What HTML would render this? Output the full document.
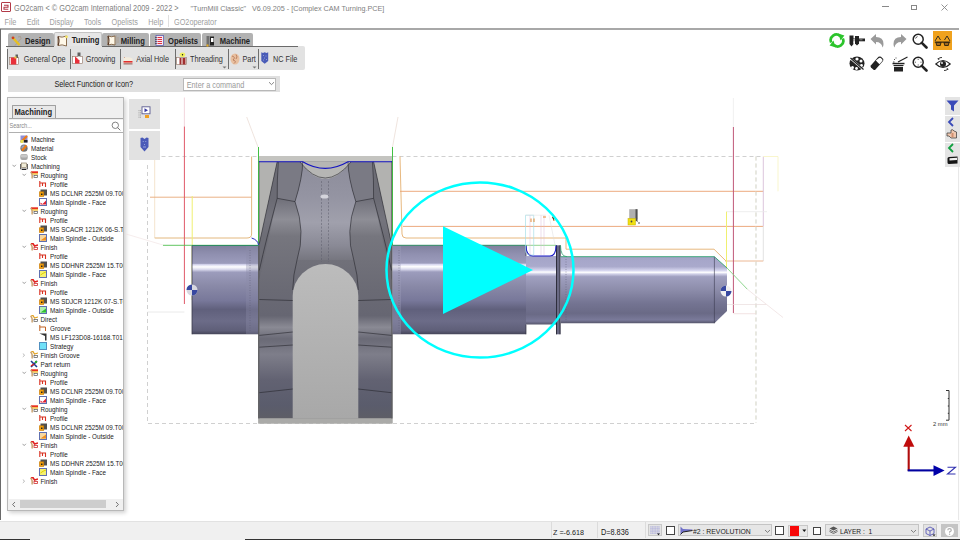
<!DOCTYPE html>
<html><head><meta charset="utf-8">
<style>
*{margin:0;padding:0;box-sizing:border-box}
html,body{width:960px;height:540px;overflow:hidden;background:#fff;font-family:"Liberation Sans",sans-serif;position:relative}
.a{position:absolute}
.t{position:absolute;white-space:nowrap;line-height:1;transform:scaleY(1.12);transform-origin:50% 10%}
#title{font-size:7.35px;color:#808080}
#menu .t{font-size:7.3px;color:#a0a0a0}
.tab{position:absolute;top:32.5px;height:13.8px;background:#b2b2b2;border-radius:2px 2px 0 0}
.tab.sel{top:32px;height:15px;background:#e6e6e6;border:1px solid #c4c4c4;border-bottom:none}
.tabt{font-weight:bold;font-size:7.6px;color:#222}
.tb{font-size:7.3px;color:#333}
.sep{position:absolute;width:1px;background:#6e6e6e}
.tree .t{font-size:6.3px;color:#222;letter-spacing:0}
</style></head><body>
<!-- title bar -->
<div class="a" style="left:1px;top:2px;width:10px;height:10px;border:1px solid #b23a48;border-radius:1px;background:#fff"></div>
<svg class="a" style="left:1px;top:2px" width="10" height="10"><path d="M3 3.2 H7 V5.2 H3 V7.2 H7.3" fill="none" stroke="#b23a48" stroke-width="1.1"/></svg>
<div id="title" class="t" style="left:14px;top:3.5px">GO2cam &lt; © GO2cam International 2009 - 2022 &gt;</div>
<div id="title2" class="t" style="left:190.5px;top:3.5px;font-size:7.2px;color:#808080">"TurnMill Classic" &nbsp; V6.09.205 - [Complex CAM Turning.PCE]</div>
<div id="menu">
<div class="t" style="left:4.6px;top:17.8px">File</div>
<div class="t" style="left:26.7px;top:17.8px">Edit</div>
<div class="t" style="left:49.6px;top:17.8px">Display</div>
<div class="t" style="left:84px;top:17.8px">Tools</div>
<div class="t" style="left:111.5px;top:17.8px">Opelists</div>
<div class="t" style="left:148.3px;top:17.8px">Help</div>
<div class="a" style="left:168px;top:15px;width:1px;height:12px;background:#e0e0e0"></div>
<div class="t" style="left:174px;top:17.8px">GO2operator</div>
</div>
<!-- window buttons -->
<div class="a" style="left:882px;top:6px;width:7px;height:1px;background:#888"></div>
<div class="a" style="left:911px;top:5px;width:6px;height:5px;border:1px solid #888"></div>
<svg class="a" style="left:940px;top:3px" width="9" height="9"><path d="M1.5 1.5 L7.5 7.5 M7.5 1.5 L1.5 7.5" stroke="#888" stroke-width="0.9"/></svg>
<!-- frame line -->
<div class="a" style="left:0;top:28px;width:959px;height:2px;background:#a8a8a8"></div>
<div class="a" style="left:0;top:29px;width:1.2px;height:491px;background:#6a6a6a"></div>


<!-- tabs -->
<div class="tab" style="left:8px;width:46px"></div>
<div class="tab sel" style="left:54px;width:48px"></div>
<div class="tab" style="left:102px;width:47px"></div>
<div class="tab" style="left:150px;width:51px"></div>
<div class="tab" style="left:202px;width:51px"></div>
<div class="t tabt" style="left:25px;top:37px">Design</div>
<div class="t tabt" style="left:71.7px;top:35.5px">Turning</div>
<div class="t tabt" style="left:120.8px;top:37px">Milling</div>
<div class="t tabt" style="left:168px;top:37px">Opelists</div>
<div class="t tabt" style="left:219.7px;top:37px">Machine</div>
<!-- toolbar -->
<div class="a" style="left:7px;top:46px;width:298px;height:24px;background:#e2e2e2;border-radius:0 2px 2px 0"></div>
<div class="a" style="left:6px;top:46px;width:48px;height:1px;background:#6a6a6a"></div><div class="a" style="left:102px;top:46px;width:196px;height:1px;background:#6a6a6a"></div>
<div class="sep" style="left:7px;top:49px;height:20px"></div>
<div class="sep" style="left:70px;top:49px;height:20px"></div>
<div class="sep" style="left:120px;top:49px;height:20px"></div>
<div class="sep" style="left:174.5px;top:49px;height:20px"></div>
<div class="sep" style="left:227.5px;top:49px;height:20px"></div>
<div class="sep" style="left:257.5px;top:49px;height:20px"></div>
<div class="t tb" style="left:23.8px;top:55.4px">General Ope</div>
<div class="t tb" style="left:85.8px;top:55.4px">Grooving</div>
<div class="t tb" style="left:136.2px;top:55.4px">Axial Hole</div>
<div class="t tb" style="left:190px;top:55.4px">Threading</div>
<div class="t tb" style="left:242.5px;top:55.4px">Part</div>
<div class="t tb" style="left:273px;top:55.4px">NC File</div>
<!-- toolbar icons -->
<svg class="a" style="left:11px;top:35.5px" width="11" height="10" viewBox="0 0 11 10">
<path d="M7 1 L9.5 0.5 L10 2.5 L4 9.5" fill="none" stroke="#a89888" stroke-width="0.8"/>
<path d="M1.5 1.5 L8.5 9" stroke="#e8c020" stroke-width="2.4"/>
<circle cx="2" cy="1.8" r="1.4" fill="#d04020"/>
</svg>
<svg class="a" style="left:56.5px;top:34.5px" width="11" height="12" viewBox="0 0 11 12">
<path d="M1 1.5 Q5 3 9.5 1 V11 Q5 9 1 10.5 Z" fill="#fff8e8" stroke="#806040" stroke-width="0.9"/>
<path d="M1 1.5 Q3 6 1 10.5" fill="none" stroke="#503020" stroke-width="1.1"/>
<circle cx="9.5" cy="1.8" r="1.4" fill="#f0e060"/>
</svg>
<svg class="a" style="left:106.5px;top:34px" width="12" height="12" viewBox="0 0 12 12">
<path d="M1 2 Q4.5 3.5 8 2 V11 Q4.5 9.5 1 11 Z" fill="#fff8e8" stroke="#806040" stroke-width="0.9"/>
<path d="M1 2 Q3 6.5 1 11" fill="none" stroke="#503020" stroke-width="1.1"/>
<path d="M9 1 V10 M11 3 V9" stroke="#b0a090" stroke-width="0.9"/>
</svg>
<svg class="a" style="left:155px;top:35.3px" width="9" height="11" viewBox="0 0 9 11">
<rect x="1" y="0.5" width="7.5" height="10" fill="#f8e8f0" stroke="#6060b0" stroke-width="0.8"/>
<path d="M2.5 2.5 H7 M2.5 4.5 H7 M2.5 6.5 H7 M2.5 8.5 H7" stroke="#e03040" stroke-width="1"/>
<path d="M0.5 2.5 H1.5 M0.5 4.5 H1.5 M0.5 6.5 H1.5 M0.5 8.5 H1.5" stroke="#111" stroke-width="1"/>
</svg>
<svg class="a" style="left:205.5px;top:34.5px" width="11" height="12" viewBox="0 0 11 12">
<rect x="0.5" y="1" width="3" height="10" fill="#707070"/>
<rect x="4" y="1.5" width="4" height="9" fill="#222"/>
<rect x="5" y="3" width="2.5" height="4" fill="#fff"/>
<rect x="0.5" y="9.5" width="2" height="2" fill="#f0b020"/>
</svg>
<svg class="a" style="left:9.3px;top:52.5px" width="10" height="12" viewBox="0 0 10 12">
<rect x="0.5" y="4.5" width="9" height="7" fill="#fff" stroke="#907060" stroke-width="0.6"/>
<rect x="1.8" y="4.5" width="5.5" height="7" fill="#e8303a"/>
<rect x="6.5" y="1.5" width="2.5" height="3.5" fill="#606060"/>
<rect x="5.5" y="3.5" width="2" height="2" fill="#f0d040"/>
</svg>
<svg class="a" style="left:71.8px;top:52px" width="11" height="12" viewBox="0 0 11 12">
<rect x="0.5" y="4.5" width="10" height="7" fill="#fff" stroke="#907060" stroke-width="0.6"/>
<path d="M3 4.5 L7.5 8 V11.5 H3 Z" fill="#e8303a"/>
<rect x="5.5" y="0.5" width="3" height="4" fill="#606060"/>
<rect x="5.8" y="4.5" width="2.5" height="3" fill="#fff"/>
</svg>
<svg class="a" style="left:123px;top:55.8px" width="10" height="9" viewBox="0 0 10 9">
<path d="M0.5 2 Q5 0.5 9.5 2.5 V8.5 H0.5 Z" fill="#f4ecdc"/>
<rect x="0.5" y="5" width="9" height="1.6" fill="#e03030"/>
<rect x="0.5" y="7.2" width="9" height="1.3" fill="#a07070"/>
<path d="M1 1 L2 2" stroke="#d08060" stroke-width="0.6"/>
</svg>
<svg class="a" style="left:176px;top:51.5px" width="11" height="13" viewBox="0 0 11 13">
<ellipse cx="6.5" cy="2.8" rx="2.8" ry="2.3" fill="#f0f060"/>
<circle cx="6.5" cy="2.8" r="0.7" fill="#111"/>
<rect x="0.5" y="5.5" width="10" height="7" fill="#fff" stroke="#907060" stroke-width="0.6"/>
<rect x="3.5" y="6" width="2" height="6.5" fill="#a03030"/><rect x="6.5" y="6" width="3" height="6.5" fill="#a03030"/>
</svg>
<svg class="a" style="left:229.5px;top:52.5px" width="10" height="12" viewBox="0 0 10 12">
<ellipse cx="5" cy="6" rx="4.5" ry="5.5" fill="#e8c0a0"/>
<path d="M2 3 Q6 4 3 7 Q7 8 4 10.5 M6 1.5 Q8 4 6 6" fill="none" stroke="#b07050" stroke-width="0.8"/>
</svg>
<svg class="a" style="left:261px;top:52px" width="7.5" height="12" viewBox="0 0 7.5 12">
<path d="M0.3 0.3 L2 1 L3.7 0.3 L5.5 1 L7.2 0.3 V9 L3.7 11.8 L0.3 9 Z" fill="#4a5cb8"/>
<circle cx="2.5" cy="3.5" r="0.45" fill="#dde"/><circle cx="5" cy="4" r="0.45" fill="#dde"/><circle cx="3.5" cy="6" r="0.45" fill="#dde"/><circle cx="5.5" cy="7.5" r="0.45" fill="#dde"/><circle cx="2.5" cy="8" r="0.45" fill="#dde"/>
</svg>
<svg class="a" style="left:221.5px;top:66px" width="5" height="3"><path d="M0.5 0.5 H4.5 L2.5 2.5Z" fill="#777"/></svg>
<svg class="a" style="left:251.5px;top:66px" width="5" height="3"><path d="M0.5 0.5 H4.5 L2.5 2.5Z" fill="#777"/></svg>
<!-- select row -->
<div class="a" style="left:7.5px;top:75.5px;width:272px;height:16.5px;background:#e0e0e0"></div>
<div class="t" style="left:54.4px;top:80px;font-size:7.3px;color:#222">Select Function or Icon?</div>
<div class="a" style="left:183.4px;top:78px;width:93px;height:12.7px;background:#fff;border:1px solid #b8b8b8"></div>
<div class="t" style="left:186.7px;top:80.5px;font-size:7.3px;color:#999">Enter a command</div>
<svg class="a" style="left:268px;top:81px" width="7" height="5"><path d="M1 1.2 L3.5 3.6 L6 1.2" fill="none" stroke="#666" stroke-width="0.8"/></svg>

<!-- left panel -->
<div class="a" style="left:7px;top:97px;width:117px;height:414px;background:#f0f0f0;border:1.5px solid #b8b8b8;box-shadow:2px 2px 4px rgba(0,0,0,0.18)"></div>
<div class="a" style="left:11.5px;top:105px;width:44px;height:13px;background:#e8e8e8;border:1px solid #a0a0a0;border-bottom:none;border-radius:1px 1px 0 0"></div>
<div class="a" style="left:8.5px;top:117.5px;width:114px;height:1px;background:#a8a8a8"></div>
<div class="t" style="left:14.5px;top:108px;font-size:7.6px;font-weight:bold;color:#222">Machining</div>
<div class="a" style="left:8.5px;top:119.5px;width:114px;height:13.5px;background:#fff;border-bottom:1px solid #b0b0b0"></div>
<div class="t" style="left:9.5px;top:123.5px;font-size:5.6px;color:#888">Search...</div>
<svg class="a" style="left:111px;top:121px" width="10" height="10"><circle cx="4.3" cy="4.3" r="3.2" fill="none" stroke="#666" stroke-width="0.8"/><path d="M6.6 6.6 L9.3 9.3" stroke="#666" stroke-width="0.9"/></svg>
<div class="a" style="left:8.5px;top:133px;width:114px;height:366px;background:#fff;overflow:hidden">
<div class="tree" style="position:absolute;left:-8.5px;top:-133px;width:200px;height:600px">
<svg class="a" style="left:20.0px;top:135.1px" width="8" height="8"><rect x="0.5" y="0.5" width="7" height="7" fill="#8f8fd8"/><path d="M1 7 L4 4 L7 1" stroke="#f07a10" stroke-width="2.2"/><rect x="0.5" y="5" width="3" height="3" fill="#e8e050"/><rect x="4" y="5" width="3.5" height="2.5" fill="#222"/></svg>
<div class="t" style="left:31.0px;top:135.7px">Machine</div>
<svg class="a" style="left:20.0px;top:144.1px" width="8" height="8"><circle cx="4" cy="4.2" r="3.6" fill="#707070"/><circle cx="3.5" cy="3.5" r="2.2" fill="#9aa0b8"/><path d="M2 6.5 L6.5 1.5" stroke="#f07a10" stroke-width="2"/></svg>
<div class="t" style="left:31.0px;top:144.7px">Material</div>
<svg class="a" style="left:20.0px;top:153.1px" width="8" height="8"><rect x="0.3" y="1" width="7.4" height="6" rx="2" fill="#a8a8a8"/><rect x="1" y="1.6" width="6" height="3" rx="1.3" fill="#c8c8c8"/></svg>
<div class="t" style="left:31.0px;top:153.7px">Stock</div>
<svg class="a" style="left:12.0px;top:164.1px" width="5" height="4"><path d="M0.5 0.8 L2.2 2.6 L3.9 0.8" fill="none" stroke="#777" stroke-width="0.7"/></svg>
<svg class="a" style="left:20.0px;top:162.1px" width="8" height="8"><path d="M0.5 2 L0.5 7 L7.5 7 L7.5 2" fill="none" stroke="#555" stroke-width="0.9"/><rect x="1.5" y="1" width="5" height="4.5" fill="#f0ecd8" stroke="#7a6a50" stroke-width="0.6"/><rect x="2" y="7" width="4" height="1" fill="#222"/></svg>
<div class="t" style="left:31.0px;top:162.7px">Machining</div>
<svg class="a" style="left:21.5px;top:173.1px" width="5" height="4"><path d="M0.5 0.8 L2.2 2.6 L3.9 0.8" fill="none" stroke="#777" stroke-width="0.7"/></svg>
<svg class="a" style="left:29.5px;top:171.1px" width="8" height="8"><rect x="1" y="0.3" width="7" height="2" fill="#e83020"/><rect x="1" y="2.2" width="7" height="1.5" fill="#f0c040"/><path d="M0.5 1 Q3 3 2 7.5" stroke="#c8a070" stroke-width="1.4" fill="#f4e0c0"/><rect x="4" y="4.5" width="3.5" height="2" fill="none" stroke="#555" stroke-width="0.7"/></svg>
<div class="t" style="left:40.5px;top:171.7px">Roughing</div>
<svg class="a" style="left:39.0px;top:180.1px" width="8" height="8"><path d="M0.8 1 L0.8 7 M0.8 3 L6.5 3 L6.5 7 M3.5 3 L3.5 6" stroke="#d83020" stroke-width="1.1" fill="none"/></svg>
<div class="t" style="left:50.0px;top:180.7px">Profile</div>
<svg class="a" style="left:39.0px;top:189.1px" width="8" height="8"><rect x="1.5" y="0.5" width="6.5" height="6" fill="#505050"/><rect x="0.3" y="2.8" width="4.5" height="4.8" fill="#f0a010" stroke="#c07000" stroke-width="0.5"/><rect x="2" y="4.5" width="1.5" height="1.5" fill="#222"/></svg>
<div class="t" style="left:50.0px;top:189.7px">MS DCLNR 2525M 09.T00</div>
<svg class="a" style="left:39.0px;top:198.1px" width="8" height="8"><rect x="0.5" y="0.5" width="7" height="7" fill="#fff" stroke="#6070b0" stroke-width="1"/><path d="M1.5 4.5 L3.5 6 L7 2.5 L7 6.5 L1.5 6.5Z" fill="#e02030"/></svg>
<div class="t" style="left:50.0px;top:198.7px">Main Spindle - Face</div>
<svg class="a" style="left:21.5px;top:209.1px" width="5" height="4"><path d="M0.5 0.8 L2.2 2.6 L3.9 0.8" fill="none" stroke="#777" stroke-width="0.7"/></svg>
<svg class="a" style="left:29.5px;top:207.1px" width="8" height="8"><rect x="1" y="0.3" width="7" height="2" fill="#e83020"/><rect x="1" y="2.2" width="7" height="1.5" fill="#f0c040"/><path d="M0.5 1 Q3 3 2 7.5" stroke="#c8a070" stroke-width="1.4" fill="#f4e0c0"/><rect x="4" y="4.5" width="3.5" height="2" fill="none" stroke="#555" stroke-width="0.7"/></svg>
<div class="t" style="left:40.5px;top:207.7px">Roughing</div>
<svg class="a" style="left:39.0px;top:216.1px" width="8" height="8"><path d="M0.8 1 L0.8 7 M0.8 3 L6.5 3 L6.5 7 M3.5 3 L3.5 6" stroke="#d83020" stroke-width="1.1" fill="none"/></svg>
<div class="t" style="left:50.0px;top:216.7px">Profile</div>
<svg class="a" style="left:39.0px;top:225.1px" width="8" height="8"><rect x="1.5" y="0.5" width="6.5" height="6" fill="#505050"/><rect x="0.3" y="2.8" width="4.5" height="4.8" fill="#f0a010" stroke="#c07000" stroke-width="0.5"/><rect x="2" y="4.5" width="1.5" height="1.5" fill="#222"/></svg>
<div class="t" style="left:50.0px;top:225.7px">MS SCACR 1212K 06-S.T</div>
<svg class="a" style="left:39.0px;top:234.1px" width="8" height="8"><rect x="0.5" y="0.5" width="7" height="7" fill="#f8d8a0" stroke="#6070b0" stroke-width="1"/><path d="M1.5 6.5 L7 2.5 L7 6.5Z" fill="#f09020"/></svg>
<div class="t" style="left:50.0px;top:234.7px">Main Spindle - Outside</div>
<svg class="a" style="left:21.5px;top:245.1px" width="5" height="4"><path d="M0.5 0.8 L2.2 2.6 L3.9 0.8" fill="none" stroke="#777" stroke-width="0.7"/></svg>
<svg class="a" style="left:29.5px;top:243.1px" width="8" height="8"><path d="M1 1 L3 0.5 L4.5 3 L8 2" stroke="#e02020" stroke-width="1.5" fill="none"/><path d="M0.5 1 Q3 3 2 7.5" stroke="#c8a070" stroke-width="1.4" fill="#f4e0c0"/><rect x="4" y="4.5" width="3.5" height="2" fill="none" stroke="#d03030" stroke-width="0.8"/></svg>
<div class="t" style="left:40.5px;top:243.7px">Finish</div>
<svg class="a" style="left:39.0px;top:252.1px" width="8" height="8"><path d="M0.8 1 L0.8 7 M0.8 3 L6.5 3 L6.5 7 M3.5 3 L3.5 6" stroke="#d83020" stroke-width="1.1" fill="none"/></svg>
<div class="t" style="left:50.0px;top:252.7px">Profile</div>
<svg class="a" style="left:39.0px;top:261.1px" width="8" height="8"><rect x="1.5" y="0.5" width="6.5" height="6" fill="#505050"/><rect x="0.3" y="2.8" width="4.5" height="4.8" fill="#f0a010" stroke="#c07000" stroke-width="0.5"/><rect x="2" y="4.5" width="1.5" height="1.5" fill="#222"/></svg>
<div class="t" style="left:50.0px;top:261.7px">MS DDHNR 2525M 15.T00</div>
<svg class="a" style="left:39.0px;top:270.1px" width="8" height="8"><rect x="0.5" y="0.5" width="7" height="7" fill="#f4f070" stroke="#6070b0" stroke-width="1"/><path d="M1.5 5 Q4 3 7 2" stroke="#e0d000" fill="none"/></svg>
<div class="t" style="left:50.0px;top:270.7px">Main Spindle - Face</div>
<svg class="a" style="left:21.5px;top:281.1px" width="5" height="4"><path d="M0.5 0.8 L2.2 2.6 L3.9 0.8" fill="none" stroke="#777" stroke-width="0.7"/></svg>
<svg class="a" style="left:29.5px;top:279.1px" width="8" height="8"><path d="M1 1 L3 0.5 L4.5 3 L8 2" stroke="#e02020" stroke-width="1.5" fill="none"/><path d="M0.5 1 Q3 3 2 7.5" stroke="#c8a070" stroke-width="1.4" fill="#f4e0c0"/><rect x="4" y="4.5" width="3.5" height="2" fill="none" stroke="#d03030" stroke-width="0.8"/></svg>
<div class="t" style="left:40.5px;top:279.7px">Finish</div>
<svg class="a" style="left:39.0px;top:288.1px" width="8" height="8"><path d="M0.8 1 L0.8 7 M0.8 3 L6.5 3 L6.5 7 M3.5 3 L3.5 6" stroke="#d83020" stroke-width="1.1" fill="none"/></svg>
<div class="t" style="left:50.0px;top:288.7px">Profile</div>
<svg class="a" style="left:39.0px;top:297.1px" width="8" height="8"><rect x="1.5" y="0.5" width="6.5" height="6" fill="#505050"/><rect x="0.3" y="2.8" width="4.5" height="4.8" fill="#f0a010" stroke="#c07000" stroke-width="0.5"/><rect x="2" y="4.5" width="1.5" height="1.5" fill="#222"/></svg>
<div class="t" style="left:50.0px;top:297.7px">MS SDJCR 1212K 07-S.T0</div>
<svg class="a" style="left:39.0px;top:306.1px" width="8" height="8"><rect x="0.5" y="0.5" width="7" height="7" fill="#b0f0b0" stroke="#6070b0" stroke-width="1"/><path d="M1.5 6.5 L7 2.5 L7 6.5Z" fill="#30c030"/></svg>
<div class="t" style="left:50.0px;top:306.7px">Main Spindle - Outside</div>
<svg class="a" style="left:21.5px;top:317.1px" width="5" height="4"><path d="M0.5 0.8 L2.2 2.6 L3.9 0.8" fill="none" stroke="#777" stroke-width="0.7"/></svg>
<svg class="a" style="left:29.5px;top:315.1px" width="8" height="8"><path d="M1 1 L3 0.5 L4.5 3 L8 2" stroke="#e0a020" stroke-width="1.2" fill="none"/><path d="M0.5 1 Q3 3 2 7.5" stroke="#c8a070" stroke-width="1.4" fill="#f4e0c0"/><rect x="4" y="4.5" width="3.5" height="2" fill="none" stroke="#555" stroke-width="0.7"/></svg>
<div class="t" style="left:40.5px;top:315.7px">Direct</div>
<svg class="a" style="left:39.0px;top:324.1px" width="8" height="8"><path d="M0.8 1 L0.8 7 M0.8 3 L6.5 3 L6.5 7" stroke="#c06020" stroke-width="1" fill="none"/></svg>
<div class="t" style="left:50.0px;top:324.7px">Groove</div>
<svg class="a" style="left:39.0px;top:333.1px" width="8" height="8"><path d="M0.5 0.5 L7.5 0.5 L7.5 7.5 L6 7.5 L6 3 Z" fill="#333"/></svg>
<div class="t" style="left:50.0px;top:333.7px">MS LF123D08-16168.T01</div>
<svg class="a" style="left:39.0px;top:342.1px" width="8" height="8"><rect x="0.5" y="0.5" width="7" height="7" fill="#70e0f8" stroke="#5090c0" stroke-width="1"/></svg>
<div class="t" style="left:50.0px;top:342.7px">Strategy</div>
<svg class="a" style="left:22.0px;top:352.6px" width="4" height="5"><path d="M0.8 0.5 L2.6 2.2 L0.8 3.9" fill="none" stroke="#999" stroke-width="0.7"/></svg>
<svg class="a" style="left:29.5px;top:351.1px" width="8" height="8"><path d="M1 1 L3 0.5 L4.5 3 L8 2" stroke="#e0a020" stroke-width="1.2" fill="none"/><path d="M0.5 1 Q3 3 2 7.5" stroke="#c8a070" stroke-width="1.4" fill="#f4e0c0"/><rect x="4" y="4.5" width="3.5" height="2" fill="none" stroke="#555" stroke-width="0.7"/></svg>
<div class="t" style="left:40.5px;top:351.7px">Finish Groove</div>
<svg class="a" style="left:29.5px;top:360.1px" width="8" height="8"><path d="M1 1 L7 7 M7 1 L1 7" stroke="#1a3a90" stroke-width="1.6"/><path d="M1 6 L4 4" stroke="#e02020" stroke-width="1.5"/><circle cx="6" cy="2" r="1.2" fill="#30b030"/></svg>
<div class="t" style="left:40.5px;top:360.7px">Part return</div>
<svg class="a" style="left:21.5px;top:371.1px" width="5" height="4"><path d="M0.5 0.8 L2.2 2.6 L3.9 0.8" fill="none" stroke="#777" stroke-width="0.7"/></svg>
<svg class="a" style="left:29.5px;top:369.1px" width="8" height="8"><rect x="1" y="0.3" width="7" height="2" fill="#e83020"/><rect x="1" y="2.2" width="7" height="1.5" fill="#f0c040"/><path d="M0.5 1 Q3 3 2 7.5" stroke="#c8a070" stroke-width="1.4" fill="#f4e0c0"/><rect x="4" y="4.5" width="3.5" height="2" fill="none" stroke="#555" stroke-width="0.7"/></svg>
<div class="t" style="left:40.5px;top:369.7px">Roughing</div>
<svg class="a" style="left:39.0px;top:378.1px" width="8" height="8"><path d="M0.8 1 L0.8 7 M0.8 3 L6.5 3 L6.5 7 M3.5 3 L3.5 6" stroke="#d83020" stroke-width="1.1" fill="none"/></svg>
<div class="t" style="left:50.0px;top:378.7px">Profile</div>
<svg class="a" style="left:39.0px;top:387.1px" width="8" height="8"><rect x="1.5" y="0.5" width="6.5" height="6" fill="#505050"/><rect x="0.3" y="2.8" width="4.5" height="4.8" fill="#f0a010" stroke="#c07000" stroke-width="0.5"/><rect x="2" y="4.5" width="1.5" height="1.5" fill="#222"/></svg>
<div class="t" style="left:50.0px;top:387.7px">MS DCLNR 2525M 09.T00</div>
<svg class="a" style="left:39.0px;top:396.1px" width="8" height="8"><rect x="0.5" y="0.5" width="7" height="7" fill="#fff" stroke="#6070b0" stroke-width="1"/><path d="M1.5 4.5 L3.5 6 L7 2.5 L7 6.5 L1.5 6.5Z" fill="#e02030"/></svg>
<div class="t" style="left:50.0px;top:396.7px">Main Spindle - Face</div>
<svg class="a" style="left:21.5px;top:407.1px" width="5" height="4"><path d="M0.5 0.8 L2.2 2.6 L3.9 0.8" fill="none" stroke="#777" stroke-width="0.7"/></svg>
<svg class="a" style="left:29.5px;top:405.1px" width="8" height="8"><rect x="1" y="0.3" width="7" height="2" fill="#e83020"/><rect x="1" y="2.2" width="7" height="1.5" fill="#f0c040"/><path d="M0.5 1 Q3 3 2 7.5" stroke="#c8a070" stroke-width="1.4" fill="#f4e0c0"/><rect x="4" y="4.5" width="3.5" height="2" fill="none" stroke="#555" stroke-width="0.7"/></svg>
<div class="t" style="left:40.5px;top:405.7px">Roughing</div>
<svg class="a" style="left:39.0px;top:414.1px" width="8" height="8"><path d="M0.8 1 L0.8 7 M0.8 3 L6.5 3 L6.5 7 M3.5 3 L3.5 6" stroke="#d83020" stroke-width="1.1" fill="none"/></svg>
<div class="t" style="left:50.0px;top:414.7px">Profile</div>
<svg class="a" style="left:39.0px;top:423.1px" width="8" height="8"><rect x="1.5" y="0.5" width="6.5" height="6" fill="#505050"/><rect x="0.3" y="2.8" width="4.5" height="4.8" fill="#f0a010" stroke="#c07000" stroke-width="0.5"/><rect x="2" y="4.5" width="1.5" height="1.5" fill="#222"/></svg>
<div class="t" style="left:50.0px;top:423.7px">MS DCLNR 2525M 09.T00</div>
<svg class="a" style="left:39.0px;top:432.1px" width="8" height="8"><rect x="0.5" y="0.5" width="7" height="7" fill="#f8d8a0" stroke="#6070b0" stroke-width="1"/><path d="M1.5 6.5 L7 2.5 L7 6.5Z" fill="#f09020"/></svg>
<div class="t" style="left:50.0px;top:432.7px">Main Spindle - Outside</div>
<svg class="a" style="left:21.5px;top:443.1px" width="5" height="4"><path d="M0.5 0.8 L2.2 2.6 L3.9 0.8" fill="none" stroke="#777" stroke-width="0.7"/></svg>
<svg class="a" style="left:29.5px;top:441.1px" width="8" height="8"><path d="M1 1 L3 0.5 L4.5 3 L8 2" stroke="#e02020" stroke-width="1.5" fill="none"/><path d="M0.5 1 Q3 3 2 7.5" stroke="#c8a070" stroke-width="1.4" fill="#f4e0c0"/><rect x="4" y="4.5" width="3.5" height="2" fill="none" stroke="#d03030" stroke-width="0.8"/></svg>
<div class="t" style="left:40.5px;top:441.7px">Finish</div>
<svg class="a" style="left:39.0px;top:450.1px" width="8" height="8"><path d="M0.8 1 L0.8 7 M0.8 3 L6.5 3 L6.5 7 M3.5 3 L3.5 6" stroke="#d83020" stroke-width="1.1" fill="none"/></svg>
<div class="t" style="left:50.0px;top:450.7px">Profile</div>
<svg class="a" style="left:39.0px;top:459.1px" width="8" height="8"><rect x="1.5" y="0.5" width="6.5" height="6" fill="#505050"/><rect x="0.3" y="2.8" width="4.5" height="4.8" fill="#f0a010" stroke="#c07000" stroke-width="0.5"/><rect x="2" y="4.5" width="1.5" height="1.5" fill="#222"/></svg>
<div class="t" style="left:50.0px;top:459.7px">MS DDHNR 2525M 15.T00</div>
<svg class="a" style="left:39.0px;top:468.1px" width="8" height="8"><rect x="0.5" y="0.5" width="7" height="7" fill="#f4f070" stroke="#6070b0" stroke-width="1"/><path d="M1.5 5 Q4 3 7 2" stroke="#e0d000" fill="none"/></svg>
<div class="t" style="left:50.0px;top:468.7px">Main Spindle - Face</div>
<svg class="a" style="left:22.0px;top:478.6px" width="4" height="5"><path d="M0.8 0.5 L2.6 2.2 L0.8 3.9" fill="none" stroke="#999" stroke-width="0.7"/></svg>
<svg class="a" style="left:29.5px;top:477.1px" width="8" height="8"><path d="M1 1 L3 0.5 L4.5 3 L8 2" stroke="#e02020" stroke-width="1.5" fill="none"/><path d="M0.5 1 Q3 3 2 7.5" stroke="#c8a070" stroke-width="1.4" fill="#f4e0c0"/><rect x="4" y="4.5" width="3.5" height="2" fill="none" stroke="#d03030" stroke-width="0.8"/></svg>
<div class="t" style="left:40.5px;top:477.7px">Finish</div>
</div></div>
<div class="a" style="left:8.5px;top:499px;width:114px;height:10px;background:#f0f0f0"></div>
<div class="a" style="left:19.5px;top:499.5px;width:86px;height:8.5px;background:#cdcdcd"></div>
<svg class="a" style="left:11px;top:500.5px" width="6" height="7"><path d="M4 1 L1.6 3.5 L4 6" fill="none" stroke="#555" stroke-width="0.8"/></svg>
<svg class="a" style="left:114px;top:500.5px" width="6" height="7"><path d="M2 1 L4.4 3.5 L2 6" fill="none" stroke="#555" stroke-width="0.8"/></svg>
<!-- VIEWPORT SVG -->
<svg id="vp" class="a" style="left:0;top:0" width="960" height="540" viewBox="0 0 960 540">
<defs>
<linearGradient id="shaftL" x1="0" y1="0" x2="0" y2="1">
<stop offset="0" stop-color="#80809e"/>
<stop offset="0.1" stop-color="#9090b0"/>
<stop offset="0.2" stop-color="#9c9cbc"/>
<stop offset="0.215" stop-color="#d8d8f0"/>
<stop offset="0.24" stop-color="#ffffff"/>
<stop offset="0.27" stop-color="#d8d8ec"/>
<stop offset="0.3" stop-color="#9c9cbc"/>
<stop offset="0.45" stop-color="#8a8aa8"/>
<stop offset="0.62" stop-color="#78789a"/>
<stop offset="0.72" stop-color="#60607c"/>
<stop offset="0.85" stop-color="#6c6c88"/>
<stop offset="0.96" stop-color="#5e5e78"/>
<stop offset="1" stop-color="#444458"/>
</linearGradient>
<linearGradient id="shaftT" x1="0" y1="0" x2="0" y2="1">
<stop offset="0" stop-color="#a4a4c8"/>
<stop offset="0.15" stop-color="#aaaacc"/>
<stop offset="0.21" stop-color="#d8d8f0"/>
<stop offset="0.235" stop-color="#ffffff"/>
<stop offset="0.26" stop-color="#d0d0e8"/>
<stop offset="0.3" stop-color="#a0a0c0"/>
<stop offset="0.5" stop-color="#8c8caa"/>
<stop offset="0.7" stop-color="#747492"/>
<stop offset="0.85" stop-color="#6a6a86"/>
<stop offset="0.95" stop-color="#7a7a9a"/>
<stop offset="1" stop-color="#55556a"/>
</linearGradient>
<linearGradient id="web" x1="0" y1="0" x2="0" y2="1">
<stop offset="0" stop-color="#76767e"/>
<stop offset="0.14" stop-color="#6e6e78"/>
<stop offset="0.225" stop-color="#8e8e96"/>
<stop offset="0.29" stop-color="#76767e"/>
<stop offset="0.5" stop-color="#6a6a74"/>
<stop offset="0.6" stop-color="#666672"/>
<stop offset="0.645" stop-color="#8a8a94"/>
<stop offset="0.69" stop-color="#6a6a76"/>
<stop offset="0.75" stop-color="#7e7e8a"/>
<stop offset="0.85" stop-color="#626272"/>
<stop offset="0.95" stop-color="#5a5c6c"/>
<stop offset="1" stop-color="#5e5e66"/>
</linearGradient>
<linearGradient id="ctr" x1="0" y1="0" x2="0" y2="1">
<stop offset="0" stop-color="#8c8c9a"/>
<stop offset="0.35" stop-color="#9494a2"/>
<stop offset="0.62" stop-color="#a0a0ac"/>
<stop offset="0.85" stop-color="#8a8a96"/>
<stop offset="1" stop-color="#76767f"/>
</linearGradient>
<linearGradient id="pin" x1="0" y1="0" x2="0" y2="1">
<stop offset="0" stop-color="#bcbcbc"/>
<stop offset="1" stop-color="#a8a8a8"/>
</linearGradient>
</defs>
<!-- dashed bounding rect -->
<path d="M147.5 156.5 H763 M147.5 165 V423.5 H756 M756 156.5 V423" fill="none" stroke="#c4c4c4" stroke-width="0.8" stroke-dasharray="4 3"/>
<!-- left orange toolpath rect -->
<path d="M154.7 156.5 V238" fill="none" stroke="#f0dcc0" stroke-width="0.8"/><path d="M154.7 238 H247 Q251.6 238 251.6 234 V156.5" fill="none" stroke="#e0b070" stroke-width="0.9"/>
<path d="M150 197.2 H251.6" fill="none" stroke="#e8a878" stroke-width="0.9"/>
<path d="M184.4 97.5 V126.5" stroke="#f0d0d8" stroke-width="0.9"/>
<path d="M184.4 126.5 V304" stroke="#e05a6a" stroke-width="1"/><path d="M147.5 312 H184.4" stroke="#e4e4e4" stroke-width="0.8"/>
<path d="M192.2 196 V300" stroke="#f0f070" stroke-width="1"/>
<path d="M163 245.3 H258.5 M258.5 147 V245" stroke="#50c050" stroke-width="0.9" fill="none"/>
<path d="M392.5 147 V245" stroke="#50c050" stroke-width="0.9" fill="none"/>
<path d="M246.7 117 L258 147 M398 117 L392.5 147" stroke="#e8d8d0" stroke-width="0.7"/>
<path d="M232 270 L250 300" stroke="#e8d8d0" stroke-width="0.6"/>
<path d="M126 234 L163 245" stroke="#f0e0e0" stroke-width="0.6"/>
<!-- right orange toolpath -->
<path d="M400 156.5 L402 234 Q402 238 406 238 H566 V249.2 H714 L727 262" fill="none" stroke="#e4b070" stroke-width="0.9"/>
<path d="M400 191.3 H763.3 M403 226.4 H763.3" fill="none" stroke="#eaa070" stroke-width="0.9"/><path d="M763.3 156.5 V226.4" fill="none" stroke="#d8c0d8" stroke-width="0.9"/>
<path d="M763.3 226.4 V261" fill="none" stroke="#e0e0e0" stroke-width="0.9"/><path d="M763.3 261 H725" fill="none" stroke="#eab088" stroke-width="0.9"/>
<path d="M763.3 156.5 H778 V191.3" fill="none" stroke="#f8f4c0" stroke-width="0.8"/>
<path d="M726.3 211.7 H767" fill="none" stroke="#e8e8e8" stroke-width="0.8"/>
<path d="M726.5 211.7 V304.5" fill="none" stroke="#f0f070" stroke-width="1"/>

<path d="M733.4 98 V127" stroke="#ececec" stroke-width="0.8"/><path d="M733.4 127 V313" stroke="#c05878" stroke-width="1"/>
<path d="M755.8 156.5 V423" stroke="#e8e8d8" stroke-width="0.9" stroke-dasharray="4 3"/>
<path d="M727 268 L747.4 289.3" stroke="#80d080" stroke-width="0.9"/><path d="M747.4 289.3 L783 317.5" stroke="#ecdcdc" stroke-width="0.7"/>
<path d="M727 304.5 H766" stroke="#eadcdc" stroke-width="0.7"/><path d="M733.4 313.7 H756" stroke="#eed8d8" stroke-width="0.7"/>
<!-- left shaft -->
<path d="M192 245.6 H258.5 V334.3 H192 Z" fill="url(#shaftL)"/>
<path d="M192 245.6 V334.3" stroke="#3a3a4a" stroke-width="0.8"/>
<rect x="246" y="246" width="12" height="88" fill="#8c8ca8" opacity="0.35"/><path d="M250 250 V332" stroke="#5a5a70" stroke-width="0.5" stroke-dasharray="1 1.5"/>
<!-- crank web -->
<rect x="258.3" y="156" width="134.2" height="267.5" fill="#b2b2b0"/>
<rect x="258.3" y="156" width="134.2" height="5.5" fill="#c4c4c0"/>
<path d="M277.2 161.7 H373.6 L391.5 243.7 V418.5 H259.3 V243.7 Z" fill="url(#web)"/>
<path d="M302.7 161.7 Q302.7 177 295 201.6 Q306 232 297 260 L354 260 Q344.8 232 355.8 201.6 Q348 177 348 161.7 Z" fill="url(#ctr)"/>
<path d="M278.3 162 Q277 180 277.2 198.3 L295 201.6 Q302.7 177 302.7 161.7 Z" fill="#7a7a84"/>
<path d="M372.5 162 Q373.8 180 373.6 198.3 L355.8 201.6 Q348 177 348 161.7 Z" fill="#7a7a84"/>
<path d="M277.2 161.7 L259.3 243.7 V280 L277.2 198.3 Z" fill="#6a6a72" opacity="0.7"/>
<path d="M373.6 161.7 L391.5 243.7 V280 L373.6 198.3 Z" fill="#6a6a72" opacity="0.7"/>

<path d="M300 161.7 Q325 196 351 161.7 Z" fill="#b6b6b4"/>
<path d="M292.7 418.5 V296 A32.8 32 0 0 1 358.3 296 V418.5 Z" fill="url(#pin)"/>
<path d="M258.3 418.5 H392.5 V423.5 H258.3 Z" fill="#aaaaa8"/>
<g fill="none" stroke="#26262e" stroke-width="0.6">
<path d="M277.2 161.7 L259.3 243.7"/>
<path d="M373.6 161.7 L391.5 243.7"/>
<path d="M278.3 162 Q277 180 277.2 198.3 L295 201.6"/>
<path d="M372.5 162 Q373.8 180 373.6 198.3 L355.8 201.6"/>
<path d="M302.7 161.7 Q302.7 177 295 201.6 Q306 232 297 260 Q293 275 292.7 290"/>
<path d="M348 161.7 Q348 177 355.8 201.6 Q344.8 232 353.8 260 Q357.8 275 358.3 290"/>
<path d="M277.2 198.3 Q266 240 259.3 270.4"/>
<path d="M373.6 198.3 Q384.8 240 391.5 270.4"/>
<path d="M300 162 Q325 194 351 162"/>
<path d="M259.3 299.5 L292.7 300.5 M259.3 335.4 L292.7 332 M259.3 347.2 L292.7 345 M259.3 392.7 L292.7 389"/>
<path d="M358.3 300.5 L391.5 299.5 M358.3 332 L391.5 335.4 M358.3 345 L391.5 347.2 M358.3 389 L391.5 392.7"/>
</g>
<path d="M258.8 161 V418.5 M392 161 V418.5" stroke="#2a2a30" stroke-width="0.9"/>
<path d="M321.5 181 V262 M328.5 181 V262" stroke="#5a5a68" stroke-width="0.5" stroke-dasharray="2 1.5"/>
<ellipse cx="324.5" cy="196.5" rx="4" ry="2" fill="#d4d4dc"/>
<path d="M258.3 161.7 H302.7 Q325 175 348 161.7 H392.5" fill="none" stroke="#1414c0" stroke-width="1.1"/>
<path d="M258.5 147 V245.3 M392.5 147 V245.3" stroke="#40c040" stroke-width="0.9"/>
<path d="M251.6 238 Q258 240 258.5 245" fill="none" stroke="#2828c0" stroke-width="1"/>
<!-- right big shaft -->
<path d="M392.5 245.3 H526 V334.3 H392.5 Z" fill="url(#shaftL)"/>
<rect x="393" y="246" width="8" height="88" fill="#a0a0bc" opacity="0.35"/><path d="M399 250 V332" stroke="#5a5a70" stroke-width="0.5" stroke-dasharray="1 1.5"/>
<!-- groove -->
<path d="M526 256 H557 V324.6 H526 Z" fill="url(#shaftT)"/>
<rect x="556" y="245.3" width="4.5" height="89" fill="#6a6a84"/>
<path d="M556.5 245.3 V334.3 M560 245.3 V334.3" stroke="#20202a" stroke-width="0.8"/>
<path d="M526 245.3 V256 M526 324.6 V334.3" stroke="#303040" stroke-width="0.7"/>
<path d="M526 245.3 Q526 256 533 256 H550 Q556 256 556 245.3" fill="none" stroke="#1818c8" stroke-width="1.1"/>
<path d="M526 245.3 H556" stroke="#60c060" stroke-width="0.7"/><path d="M392.5 245.3 H526" stroke="#2e8a62" stroke-width="1"/><path d="M192 245.5 H258.5" stroke="#2e8a62" stroke-width="1"/>
<path d="M525.5 215.2 V250 Q525.5 255 530 255 H533.7 V215.2 Z" fill="none" stroke="#a8e0e8" stroke-width="0.7"/>
<path d="M530 215.2 V255 M541 215.2 V255 M544 215.2 V255" stroke="#d8b8d8" stroke-width="0.5"/>
<path d="M525.5 215.2 H546 M549 215.2 L555 245" stroke="#dcdcdc" stroke-width="0.5"/>
<path d="M531 218.5 V222 M534 218.5 V222 M543 217 H546 M552 217 H554 V221" stroke="#e08020" stroke-width="0.9"/>
<!-- thin shaft -->
<path d="M560.5 256.7 H714.4 L727 268 V311 L714.4 323.3 H560.5 Z" fill="url(#shaftT)"/>
<path d="M714.4 256.7 V323.3" stroke="#3a3a50" stroke-width="0.6"/>
<path d="M560.5 256.7 H714.4 L727 268" fill="none" stroke="#30a070" stroke-width="0.9"/>
<path d="M560.5 245.3 Q560.5 256.7 567 256.7" fill="none" stroke="#30a070" stroke-width="0.8"/>
<path d="M566 259 V322" stroke="#5a5a70" stroke-width="0.5" stroke-dasharray="1 1.5"/>
<!-- origin markers -->
<g transform="translate(192,290)"><circle r="5.5" fill="#d8d8e0"/><path d="M0 0 V-5.5 A5.5 5.5 0 0 0 -5.5 0 Z M0 0 V5.5 A5.5 5.5 0 0 0 5.5 0 Z" fill="#3848a0"/></g>
<g transform="translate(726,291)"><circle r="5.5" fill="#f0f0f0"/><path d="M0 0 V-5.5 A5.5 5.5 0 0 0 -5.5 0 Z M0 0 V5.5 A5.5 5.5 0 0 0 5.5 0 Z" fill="#3848a0"/></g>
<!-- tool -->
<rect x="629.2" y="209.2" width="8.3" height="10" fill="#b0b0b0"/>
<rect x="635.5" y="209.2" width="2" height="12" fill="#505050"/>
<rect x="628" y="218.5" width="7.5" height="6.5" fill="#f0e010" stroke="#c8b000" stroke-width="0.5"/>
<circle cx="631.5" cy="221.5" r="0.9" fill="#444"/>
<path d="M637 221 L640 224 M638 224 L640 222" stroke="#555" stroke-width="0.5"/>
<!-- scale bar -->
<path d="M946 390.5 H949 V420.2 H946 M949 398.5 H947.8 M949 406 H947.8 M949 413.3 H947.8" fill="none" stroke="#333" stroke-width="1"/>
<text x="933" y="426" font-family="Liberation Sans" font-size="5.8" fill="#333">2 mm</text>
<!-- axis triad -->
<path d="M905 425 L911.5 431 M911.5 425 L905 431" stroke="#d01818" stroke-width="1.1"/>
<path d="M908.7 471 V446" stroke="#b00c0c" stroke-width="2.1"/>
<path d="M903.3 446.8 L908.7 435.5 L914.4 446.8 Z" fill="#c00c0c"/>
<path d="M907.7 470.4 H934" stroke="#0000a0" stroke-width="2.1"/>
<path d="M933.5 465.2 L944.6 470.5 L933.5 475.9 Z" fill="#0000a8"/>
<path d="M947.5 467.2 H955.5 L947.5 474 H955.5" fill="none" stroke="#3030b0" stroke-width="1.1"/>
<!-- right border line -->
<path d="M958.6 167 V520" stroke="#e6e6e6" stroke-width="1"/>
<!-- play overlay -->
<ellipse cx="480" cy="270" rx="93.5" ry="87.6" fill="none" stroke="#00ffff" stroke-width="2.5"/>
<path d="M443 226.3 L533 270 L443 313.9 Z" fill="#00ffff"/>
</svg>

<!-- top right icons -->
<svg class="a" style="left:828.5px;top:33.3px" width="16" height="15" viewBox="0 0 16 15">
<path d="M2.2 9.5 A5.6 5.6 0 0 1 11.2 3.2" fill="none" stroke="#2cc42c" stroke-width="2.7"/>
<path d="M9.2 0.6 L15.4 2.6 L11.6 7.6 Z" fill="#2cc42c"/>
<path d="M13.8 5.5 A5.6 5.6 0 0 1 4.8 11.8" fill="none" stroke="#2cc42c" stroke-width="2.7"/>
<path d="M6.8 14.4 L0.6 12.4 L4.4 7.4 Z" fill="#2cc42c"/>
</svg>
<svg class="a" style="left:848.5px;top:34.5px" width="16" height="12" viewBox="0 0 16 12">
<path d="M0.5 0.5 H4.5 V9 L2.5 11.5 L0.5 9 Z" fill="#222"/>
<rect x="4" y="3.5" width="12" height="2.8" fill="#222"/>
<path d="M6 1 H10 V8.5 L8 10.5 L6 8.5 Z" fill="#222"/>
<rect x="4.5" y="4" width="1.2" height="4.5" fill="#fff"/>
<rect x="10.5" y="4.3" width="3" height="1" fill="#888"/>
</svg>
<svg class="a" style="left:870px;top:33px" width="14" height="15" viewBox="0 0 14 15">
<path d="M0.5 6 L6 1 V4 Q13.5 4 13.5 11 Q13.5 13 12.5 14.5 Q11.5 9 6 9 V11.5 Z" fill="#9a9a9a"/>
</svg>
<svg class="a" style="left:892.5px;top:33px" width="14" height="15" viewBox="0 0 14 15">
<path d="M13.5 6 L8 1 V4 Q0.5 4 0.5 11 Q0.5 13 1.5 14.5 Q2.5 9 8 9 V11.5 Z" fill="#9a9a9a"/>
</svg>
<svg class="a" style="left:912px;top:32.8px" width="16" height="16" viewBox="0 0 16 16">
<circle cx="6.2" cy="6.2" r="5" fill="#fff" stroke="#222" stroke-width="1.5"/>
<path d="M9.8 9.8 L14.5 14.5" stroke="#222" stroke-width="2.6" stroke-linecap="round"/>
<path d="M3.6 5.5 A2.8 2.8 0 0 1 5.5 3.6" fill="none" stroke="#222" stroke-width="0.8"/>
</svg>
<div class="a" style="left:933px;top:31px;width:19px;height:18.8px;background:#f0a21e"></div>
<svg class="a" style="left:934px;top:33px" width="17" height="15" viewBox="0 0 17 15">
<path d="M1 8 L4 3 L6.5 7 M16 8 L13 3 L10.5 7" fill="none" stroke="#222" stroke-width="0.9"/>
<path d="M0.8 8.5 H16.2 V9.8 H15.5 L14.5 13 H10.5 L9.5 9.8 H7.5 L6.5 13 H2.5 L1.5 9.8 H0.8 Z" fill="#3a2a10"/>
<path d="M2.6 10 H6.3 L5.8 12 H3.2 Z M10.7 10 H14.4 L13.8 12 H11.2 Z" fill="#a06a20"/>
</svg>
<svg class="a" style="left:848.5px;top:56px" width="16" height="15" viewBox="0 0 16 15">
<ellipse cx="8" cy="7.5" rx="7.5" ry="7" fill="#222"/>
<circle cx="8" cy="3" r="1.6" fill="#fff"/><circle cx="12" cy="5" r="1.5" fill="#fff"/><circle cx="12.5" cy="9.5" r="1.4" fill="#fff"/><circle cx="3.5" cy="11.5" r="1.5" fill="#fff"/><circle cx="7.5" cy="12.5" r="1.4" fill="#fff"/>
<path d="M1 2 L15 14" stroke="#fff" stroke-width="2.2"/><path d="M1.5 2 L14.5 13.5" stroke="#222" stroke-width="1.2"/>
</svg>
<svg class="a" style="left:869.5px;top:56px" width="14" height="15" viewBox="0 0 14 15">
<path d="M8.5 0.8 Q10 0 11 0.8 L13 2.8 Q13.8 3.8 13 5 L5.5 13.5 Q4.5 14.5 3.5 13.8 L1 11.5 Q0 10.5 1 9.2 Z" fill="#222"/>
<path d="M9 2 Q10 1.3 10.8 2 L12.3 3.5 Q12.8 4.2 12.3 5 L9.5 8.2 L5.8 4.5 Z" fill="#fff"/>
</svg>
<svg class="a" style="left:892px;top:55.5px" width="16" height="16" viewBox="0 0 16 16">
<path d="M6 6 L15.5 1" stroke="#222" stroke-width="1.2"/>
<path d="M2 3 L3 4 M4 1.5 V2.5 M1 6 H2.5" stroke="#222" stroke-width="0.8"/>
<rect x="0.5" y="6.8" width="12" height="1.5" fill="#222"/>
<rect x="1.5" y="9" width="10" height="1" fill="#222"/>
<rect x="2" y="10.8" width="9" height="4.7" fill="#222"/>
</svg>
<svg class="a" style="left:912px;top:55.8px" width="16" height="16" viewBox="0 0 16 16">
<circle cx="6.2" cy="6.2" r="5" fill="#fff" stroke="#222" stroke-width="1.5"/>
<path d="M9.8 9.8 L14.5 14.5" stroke="#222" stroke-width="2.6" stroke-linecap="round"/>
<path d="M6.2 2.8 V4 M6.2 8.4 V9.6 M2.8 6.2 H4 M8.4 6.2 H9.6" stroke="#555" stroke-width="0.9"/>
</svg>
<svg class="a" style="left:935px;top:55.8px" width="16" height="16" viewBox="0 0 16 16">
<path d="M0.8 8 Q8 1 15.2 8 Q8 15 0.8 8 Z" fill="#fff" stroke="#222" stroke-width="1.1"/>
<circle cx="8" cy="8" r="3" fill="#222"/><circle cx="7" cy="7" r="0.9" fill="#fff"/>
<path d="M3 3 Q5 1.2 7 1.5" fill="none" stroke="#222" stroke-width="0.9"/><path d="M2.5 2 L3 3.8 L4.8 3.3" fill="#222"/>
<path d="M13 13 Q11 14.8 9 14.5" fill="none" stroke="#222" stroke-width="0.9"/><path d="M13.5 14 L13 12.2 L11.2 12.7" fill="#222"/>
</svg>
<!-- side buttons -->
<div class="a" style="left:129px;top:99px;width:31px;height:29.5px;background:#e2e2e2"></div>
<div class="a" style="left:129px;top:131px;width:31px;height:29.2px;background:#e2e2e2"></div>
<svg class="a" style="left:138px;top:106px" width="13" height="13" viewBox="0 0 13 13">
<rect x="4" y="0.8" width="8" height="7" fill="#fff" stroke="#5a5a90" stroke-width="0.9"/>
<path d="M6.5 2.3 L10 4.3 L6.5 6.3 Z" fill="#3838a0"/>
<path d="M1 4 V12 M2.5 4 V12" stroke="#999" stroke-width="0.8" stroke-dasharray="1 0.8"/>
<rect x="7" y="9" width="4" height="3" fill="#f0a020"/>
</svg>
<svg class="a" style="left:140px;top:137px" width="9" height="15" viewBox="0 0 9 15">
<path d="M0.5 1 L2.5 0.5 L4.5 2 L6.5 0.5 L8.5 1 V10 L4.5 14.5 L0.5 10 Z" fill="#4a5ab8"/>
<path d="M3 4 L3.5 5 M6 4 L5.5 5 M4.5 7 V8 M3 10 L6 10" stroke="#c8d0f0" stroke-width="0.6"/>
</svg>
<!-- right panel -->
<div class="a" style="left:945px;top:97px;width:15px;height:18px;background:#e4e4e4"></div>
<div class="a" style="left:945px;top:116px;width:15px;height:26px;background:#e4e4e4"></div>
<div class="a" style="left:945px;top:142.5px;width:15px;height:24.5px;background:#e4e4e4"></div>
<svg class="a" style="left:946px;top:100px" width="13" height="12" viewBox="0 0 13 12"><path d="M0.5 0.5 H12.5 L8 5.5 V11.5 L5 9.5 V5.5 Z" fill="#3a4ab8"/></svg>
<svg class="a" style="left:947px;top:117px" width="8" height="10" viewBox="0 0 8 10"><path d="M6 1 L2 5 L6 9" fill="none" stroke="#3a4ab8" stroke-width="1.8"/></svg>
<svg class="a" style="left:946px;top:128px" width="12" height="12" viewBox="0 0 12 12"><path d="M1 5 H5 V2 Q7 1 8 3 L10.5 4 V10 H5 L3 8 H1 Z" fill="#f0c8b0" stroke="#333" stroke-width="0.7"/><rect x="5.5" y="5" width="2" height="4" fill="#d09070"/></svg>
<svg class="a" style="left:947px;top:143px" width="8" height="10" viewBox="0 0 8 10"><path d="M6 1 L2 5 L6 9" fill="none" stroke="#10a040" stroke-width="1.8"/></svg>
<svg class="a" style="left:946.5px;top:156px" width="11" height="9" viewBox="0 0 11 9"><path d="M0.5 2.5 Q0.5 1 2 1 L10.5 0.5 V7.5 L2 8 Q0.5 8 0.5 6.5 Z" fill="#151515"/><path d="M2.5 2.2 L10 1.8 V4 L2.5 4.6 Z" fill="#f0f0f0"/></svg>
<!-- status bar -->
<div class="a" style="left:0;top:520.5px;width:960px;height:19.5px;background:#f0f0f0;border-top:1px solid #e2e2e2"></div>
<div class="a" style="left:550.5px;top:522px;width:1px;height:16px;background:#dcdcdc"></div>
<div class="a" style="left:597px;top:522px;width:1px;height:16px;background:#dcdcdc"></div>
<div class="a" style="left:644.5px;top:522px;width:1px;height:16px;background:#dcdcdc"></div>
<div class="t" style="left:553px;top:527.5px;font-size:7.2px;color:#222">Z =-6.618</div>
<div class="t" style="left:600.9px;top:527.5px;font-size:7.35px;color:#222">D=8.836</div>
<div class="a" style="left:648.3px;top:524.3px;width:13.4px;height:12px;background:#e4e4e4;border:1px solid #c8c8c8"></div>
<svg class="a" style="left:650px;top:526px" width="11" height="10"><g stroke="#8888d8" stroke-width="0.6" stroke-dasharray="0.8 0.8"><path d="M0.5 1 H9.5 M0.5 3 H9.5 M0.5 5 H9.5 M0.5 7 H9.5 M1 0.5 V8 M3 0.5 V8 M5 0.5 V8 M7 0.5 V8 M9 0.5 V8"/></g><path d="M7 7.5 L10 7.5 L8.5 9.3Z" fill="#111"/></svg>
<div class="a" style="left:665.8px;top:526.3px;width:9.2px;height:8.7px;background:#fff;border:1px solid #444"></div>
<div class="a" style="left:678.3px;top:524.3px;width:93.4px;height:12px;background:#e6e6e6;border:1px solid #c4c4c4"></div>
<svg class="a" style="left:680px;top:526px" width="13" height="9"><path d="M0.5 0.5 L0.5 8.5 L3 6 L12.5 4.5 L12.5 3.5 L3 3 Z" fill="#7070c8"/><path d="M0.5 8.5 L3 6 L12.5 4.5" stroke="#222" stroke-width="1" fill="none"/></svg>
<div class="t" style="left:693px;top:527.7px;font-size:6.85px;color:#222">#2 : REVOLUTION</div>
<svg class="a" style="left:764px;top:528.5px" width="7" height="5"><path d="M1 1 L3.5 3.4 L6 1" fill="none" stroke="#666" stroke-width="0.8"/></svg>
<div class="a" style="left:774.7px;top:526.3px;width:9px;height:8.7px;background:#fff;border:1px solid #444"></div>
<div class="a" style="left:788.4px;top:524.6px;width:19.7px;height:12.1px;background:#e8e8e8;border:1px solid #c8c8c8"></div>
<div class="a" style="left:789.8px;top:526px;width:9.5px;height:9.5px;background:#f80808"></div>
<svg class="a" style="left:802px;top:529px" width="5" height="4"><path d="M0.3 0.5 H4.3 L2.3 3Z" fill="#111"/></svg>
<div class="a" style="left:813.4px;top:526.5px;width:8px;height:8.5px;background:#fff;border:1px solid #444"></div>
<div class="a" style="left:825px;top:524.3px;width:93.7px;height:12px;background:#e6e6e6;border:1px solid #c4c4c4"></div>
<svg class="a" style="left:829px;top:526px" width="9" height="8"><path d="M4.5 0.5 L8.5 2.5 L4.5 4.5 L0.5 2.5Z" fill="#555"/><path d="M0.5 4 L4.5 6 L8.5 4 M0.5 5.5 L4.5 7.5 L8.5 5.5" stroke="#555" stroke-width="0.8" fill="none"/></svg>
<div class="t" style="left:840px;top:527.7px;font-size:6.6px;color:#222">LAYER : &nbsp;1</div>
<svg class="a" style="left:910px;top:528.5px" width="7" height="5"><path d="M1 1 L3.5 3.4 L6 1" fill="none" stroke="#666" stroke-width="0.8"/></svg>
<div class="a" style="left:923.4px;top:524.3px;width:13.2px;height:12.5px;background:#e4e4e4;border:1px solid #c8c8c8"></div>
<svg class="a" style="left:925px;top:525.5px" width="11" height="11"><path d="M5 1 L9 3 V7.5 L5 9.5 L1 7.5 V3 Z M1 3 L5 5 L9 3 M5 5 V9.5" fill="none" stroke="#4848b0" stroke-width="0.8"/><path d="M7.5 8.5 H10.5 L9 10.3Z" fill="#111"/></svg>
<div class="a" style="left:940.9px;top:524.3px;width:17.6px;height:12.7px;background:#c4c4c4"></div>
<svg class="a" style="left:944px;top:525.5px" width="11" height="11"><circle cx="5.5" cy="5.5" r="4.5" fill="#fff"/><path d="M3.8 4.3 Q3.8 2.6 5.5 2.6 Q7.3 2.6 7.3 4.2 Q7.3 5.2 5.6 5.9 V6.8" fill="none" stroke="#b0b0b0" stroke-width="1.2"/><circle cx="5.6" cy="8.3" r="0.7" fill="#b0b0b0"/></svg>
<div class="a" style="left:0;top:538.8px;width:30px;height:1.2px;background:#333"></div>
<div class="a" style="left:245px;top:538.8px;width:715px;height:1.2px;background:#333"></div>
</body></html>
